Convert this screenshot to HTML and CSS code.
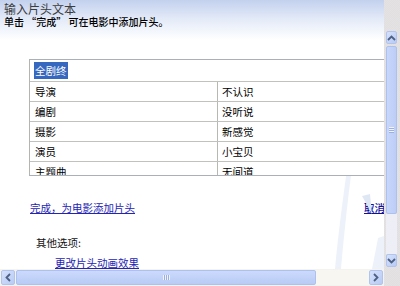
FILE: index.html
```html
<!DOCTYPE html>
<html lang="zh-CN">
<head>
<meta charset="utf-8">
<title>输入片头文本</title>
<link rel="stylesheet" href="styles.css">
</head>
<body>
<div class="window">
  <div class="main">
    <svg class="decor" width="90" height="110" viewBox="0 0 90 110" aria-hidden="true">
      <path d="M46 0 C42 30 38 60 35 93 L41 93 C44 60 47 30 51 0 Z" fill="#edf2fa"/>
      <path d="M62 20 L70 18 L72 38 Z" fill="#dfe7f5"/>
      <path d="M78 62 L84 60 L84 93 L72 93 Z" fill="#edf2fa"/>
    </svg>
    <div class="header">
      <div class="title">输入片头文本</div>
      <div class="subtitle">单击 “完成” 可在电影中添加片头。</div>
    </div>
    <div class="panel">
      <table class="grid">
        <tr class="head"><td colspan="2"><span class="sel">全剧终</span></td></tr>
        <tr><td class="c1">导演</td><td class="c2">不认识</td></tr>
        <tr><td class="c1">编剧</td><td class="c2">没听说</td></tr>
        <tr><td class="c1">摄影</td><td class="c2">新感觉</td></tr>
        <tr><td class="c1">演员</td><td class="c2">小宝贝</td></tr>
        <tr><td class="c1">主题曲</td><td class="c2">无间道</td></tr>
      </table>
    </div>
    <div class="actions">
      <a class="link" href="#">完成，为电影添加片头</a>
      <a class="link dark" href="#">取消</a>
    </div>
    <div class="more">其他选项:</div>
    <a class="link sub" href="#">更改片头动画效果</a>
  </div>
  <div class="vstrip">
    <div class="vscroll">
      <div class="btn vbtn"><svg width="9" height="6" viewBox="0 0 9 6"><path d="M1 5 L4.5 1.5 L8 5" fill="none" stroke="#4d6185" stroke-width="1.8"/></svg></div>
      <div class="vthumb"><span class="grip-v"></span></div>
      <div class="vtrack"></div>
      <div class="btn vbtn"><svg width="9" height="6" viewBox="0 0 9 6"><path d="M1 1 L4.5 4.5 L8 1" fill="none" stroke="#4d6185" stroke-width="1.8"/></svg></div>
    </div>
  </div>
  <div class="hscroll">
    <div class="btn hbtn"><svg width="6" height="9" viewBox="0 0 6 9"><path d="M5 1 L1.5 4.5 L5 8" fill="none" stroke="#4d6185" stroke-width="1.8"/></svg></div>
    <div class="hthumb"><span class="grip-h"></span></div>
    <div class="htrack"></div>
    <div class="btn hbtn"><svg width="6" height="9" viewBox="0 0 6 9"><path d="M1 1 L4.5 4.5 L1 8" fill="none" stroke="#4d6185" stroke-width="1.8"/></svg></div>
  </div>
</div>
</body>
</html>
```

FILE: styles.css
```css
html, body {
  margin: 0;
  padding: 0;
}
body {
  width: 400px;
  height: 286px;
  overflow: hidden;
  background: #ffffff;
  font-family: "Noto Sans CJK SC", "Noto Sans", sans-serif;
  color: #000;
}
.window {
  display: grid;
  grid-template-columns: 384px 16px;
  grid-template-rows: 269px 17px;
  width: 400px;
  height: 286px;
}
.main {
  position: relative;
  overflow: hidden;
  background: linear-gradient(#c3d1ee 0, #e2e9f7 18px, #ffffff 40px);
}
.decor {
  position: absolute;
  left: 300px;
  top: 176px;
}
.header {
  padding: 1px 0 0 4px;
}
.title {
  font-size: 12px;
  line-height: 15px;
  color: #3c3c3c;
}
.subtitle {
  font-size: 10px;
  line-height: 12px;
  font-weight: 500;
  color: #000;
}
.panel {
  position: relative;
  margin: 31px 0 0 29px;
  height: 115px;
  border-top: 1px solid #a9b0b8;
  border-left: 1px solid #b4b4b0;
  border-bottom: 1px solid #a9b0b8;
  overflow: hidden;
  background: #fff;
}
.grid {
  border-collapse: collapse;
  width: 356px;
  font-size: 10.5px;
}
.grid td {
  padding: 0;
  height: 19px;
  border-bottom: 1px solid #c2c2bc;
  vertical-align: middle;
  line-height: 12px;
}
.grid .head td {
  height: 21px;
  padding-left: 4px;
}
.sel {
  background: #3668c0;
  color: #fff;
  padding: 1px 1px;
}
.c1 {
  width: 182px;
  padding-left: 5px !important;
}
.c2 {
  border-left: 1px solid #b8b8b2;
  padding-left: 4px !important;
}
.actions {
  display: flex;
  justify-content: space-between;
  width: 355px;
  margin: 25px 0 0 30px;
  font-size: 10.5px;
  line-height: 13px;
}
.link {
  color: #2424b4;
  text-decoration: underline;
  font-size: 10.5px;
}
.link.dark {
  color: #10109a;
  font-weight: 500;
}
.more {
  margin: 22px 0 0 36px;
  font-size: 10.5px;
  line-height: 13px;
  color: #111;
}
.link.sub {
  display: block;
  margin: 7px 0 0 55px;
  line-height: 13px;
  width: max-content;
}
.vstrip {
  grid-row: 1 / 3;
  grid-column: 2;
  background-color: #e6e0ec;
  background-image: repeating-conic-gradient(#f0d6ea 0 25%, #d6ecd8 0 50%);
  background-size: 2px 2px;
  padding: 31px 3px 0 2px;
}
.vscroll {
  display: flex;
  flex-direction: column;
  width: 11px;
  height: 236px;
}
.btn {
  display: flex;
  align-items: center;
  justify-content: center;
  background: linear-gradient(135deg, #d6e1fb, #b8cbf5);
  border: 1px solid #b1c4ee;
  border-radius: 2px;
  box-sizing: border-box;
}
.vbtn {
  height: 13px;
  flex: none;
}
.vthumb {
  margin-top: 2px;
  height: 168px;
  flex: none;
  box-sizing: border-box;
  border: 1px solid #adc1ef;
  border-radius: 2px;
  background: linear-gradient(90deg, #c8d6fb, #bccdf6);
  display: flex;
  align-items: center;
  justify-content: center;
}
.grip-v {
  width: 5px;
  height: 6px;
  background: repeating-linear-gradient(#eef3ff 0 1px, #9cb0de 1px 2px);
}
.vtrack {
  flex: 1;
  background: #eeeef6;
}
.hscroll {
  grid-row: 2;
  grid-column: 1;
  display: flex;
  align-items: stretch;
  padding: 1px;
  background: #f4f3ee;
}
.hbtn {
  width: 14px;
  flex: none;
}
.hthumb {
  margin-left: 1px;
  width: 300px;
  flex: none;
  box-sizing: border-box;
  border: 1px solid #adc1ef;
  border-radius: 2px;
  background: linear-gradient(#cbd9fc, #b9cbf5);
  display: flex;
  align-items: center;
  justify-content: center;
}
.grip-h {
  width: 7px;
  height: 5px;
  background: repeating-linear-gradient(90deg, #eef3ff 0 1px, #9cb0de 1px 2px);
}
.htrack {
  flex: 1;
  background: #f7f6f0;
}
```
